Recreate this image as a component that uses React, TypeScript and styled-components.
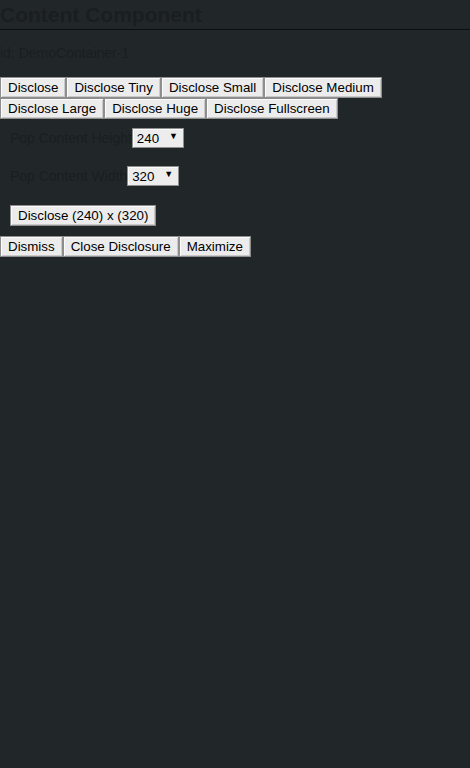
import React, { useState } from "react";
import styled, { createGlobalStyle } from "styled-components";

const GlobalStyle = createGlobalStyle`
  html, body {
    margin: 0;
    padding: 0;
    background: #212729;
  }
  body {
    font-family: "Liberation Sans", Arial, sans-serif;
    color: #1a1e20;
  }
`;

const Page = styled.div`
  min-height: 768px;
  background: #212729;
`;

const Title = styled.h1`
  margin: 0;
  height: 29px;
  line-height: 30px;
  font-size: 21px;
  font-weight: 700;
  color: #1a1e20;
  border-bottom: 1px solid #0c0e0f;
`;

const IdLine = styled.div`
  margin: 15px 0 0;
  font-size: 14px;
  line-height: 16px;
`;

const ButtonBar = styled.div<{ top?: number }>`
  display: flex;
  flex-wrap: wrap;
  margin-top: ${(p) => p.top ?? 0}px;
`;

const Button = styled.button`
  font-family: "Liberation Sans", Arial, sans-serif;
  font-size: 13.33px;
  line-height: 15px;
  height: 21px;
  padding: 1px 7px;
  margin: 0;
  color: #000;
  background: #ececec;
  border: 1px solid #8e8e8e;
  box-shadow: inset 1px 1px 0 #fbfbfb, inset -1px -1px 0 #c9c9c9;
  cursor: pointer;
`;

const Controls = styled.div`
  padding: 9px 10px 10px;
  display: flex;
  flex-direction: column;
  align-items: flex-start;
`;

const Field = styled.label<{ gapAfter: number }>`
  display: flex;
  align-items: center;
  height: 20px;
  font-size: 14px;
  letter-spacing: -0.02px;
  margin-bottom: ${(p) => p.gapAfter}px;
`;

const SelectWrap = styled.span`
  position: relative;
  display: inline-block;

  &::after {
    content: "▼";
    position: absolute;
    right: 6px;
    top: 3px;
    font-size: 9px;
    color: #000;
    pointer-events: none;
  }
`;

const Select = styled.select`
  appearance: none;
  font-family: "Liberation Sans", Arial, sans-serif;
  font-size: 13.33px;
  width: 52px;
  height: 20px;
  padding: 0 0 0 4px;
  margin: 0;
  color: #000;
  background: #ededed;
  border: 1px solid #8e8e8e;
  box-shadow: inset 1px 1px 0 #fbfbfb;
  border-radius: 0;
  outline: none;
`;

const sizes = ["240", "320", "480", "640"];

export default function App() {
  const [height, setHeight] = useState("240");
  const [width, setWidth] = useState("320");

  return (
    <Page>
      <GlobalStyle />
      <Title>Content Component</Title>
      <IdLine>id: DemoContainer-1</IdLine>
      <ButtonBar top={16}>
        <Button>Disclose</Button>
        <Button>Disclose Tiny</Button>
        <Button>Disclose Small</Button>
        <Button>Disclose Medium</Button>
        <Button>Disclose Large</Button>
        <Button>Disclose Huge</Button>
        <Button>Disclose Fullscreen</Button>
      </ButtonBar>
      <Controls>
        <Field gapAfter={18}>
          Pop Content Height
          <SelectWrap>
            <Select value={height} onChange={(e) => setHeight(e.target.value)}>
              {sizes.map((s) => (
                <option key={s}>{s}</option>
              ))}
            </Select>
          </SelectWrap>
        </Field>
        <Field gapAfter={19}>
          Pop Content Width
          <SelectWrap>
            <Select value={width} onChange={(e) => setWidth(e.target.value)}>
              {sizes.map((s) => (
                <option key={s}>{s}</option>
              ))}
            </Select>
          </SelectWrap>
        </Field>
        <Button>
          Disclose ({height}) x ({width})
        </Button>
      </Controls>
      <ButtonBar>
        <Button>Dismiss</Button>
        <Button>Close Disclosure</Button>
        <Button>Maximize</Button>
      </ButtonBar>
    </Page>
  );
}
